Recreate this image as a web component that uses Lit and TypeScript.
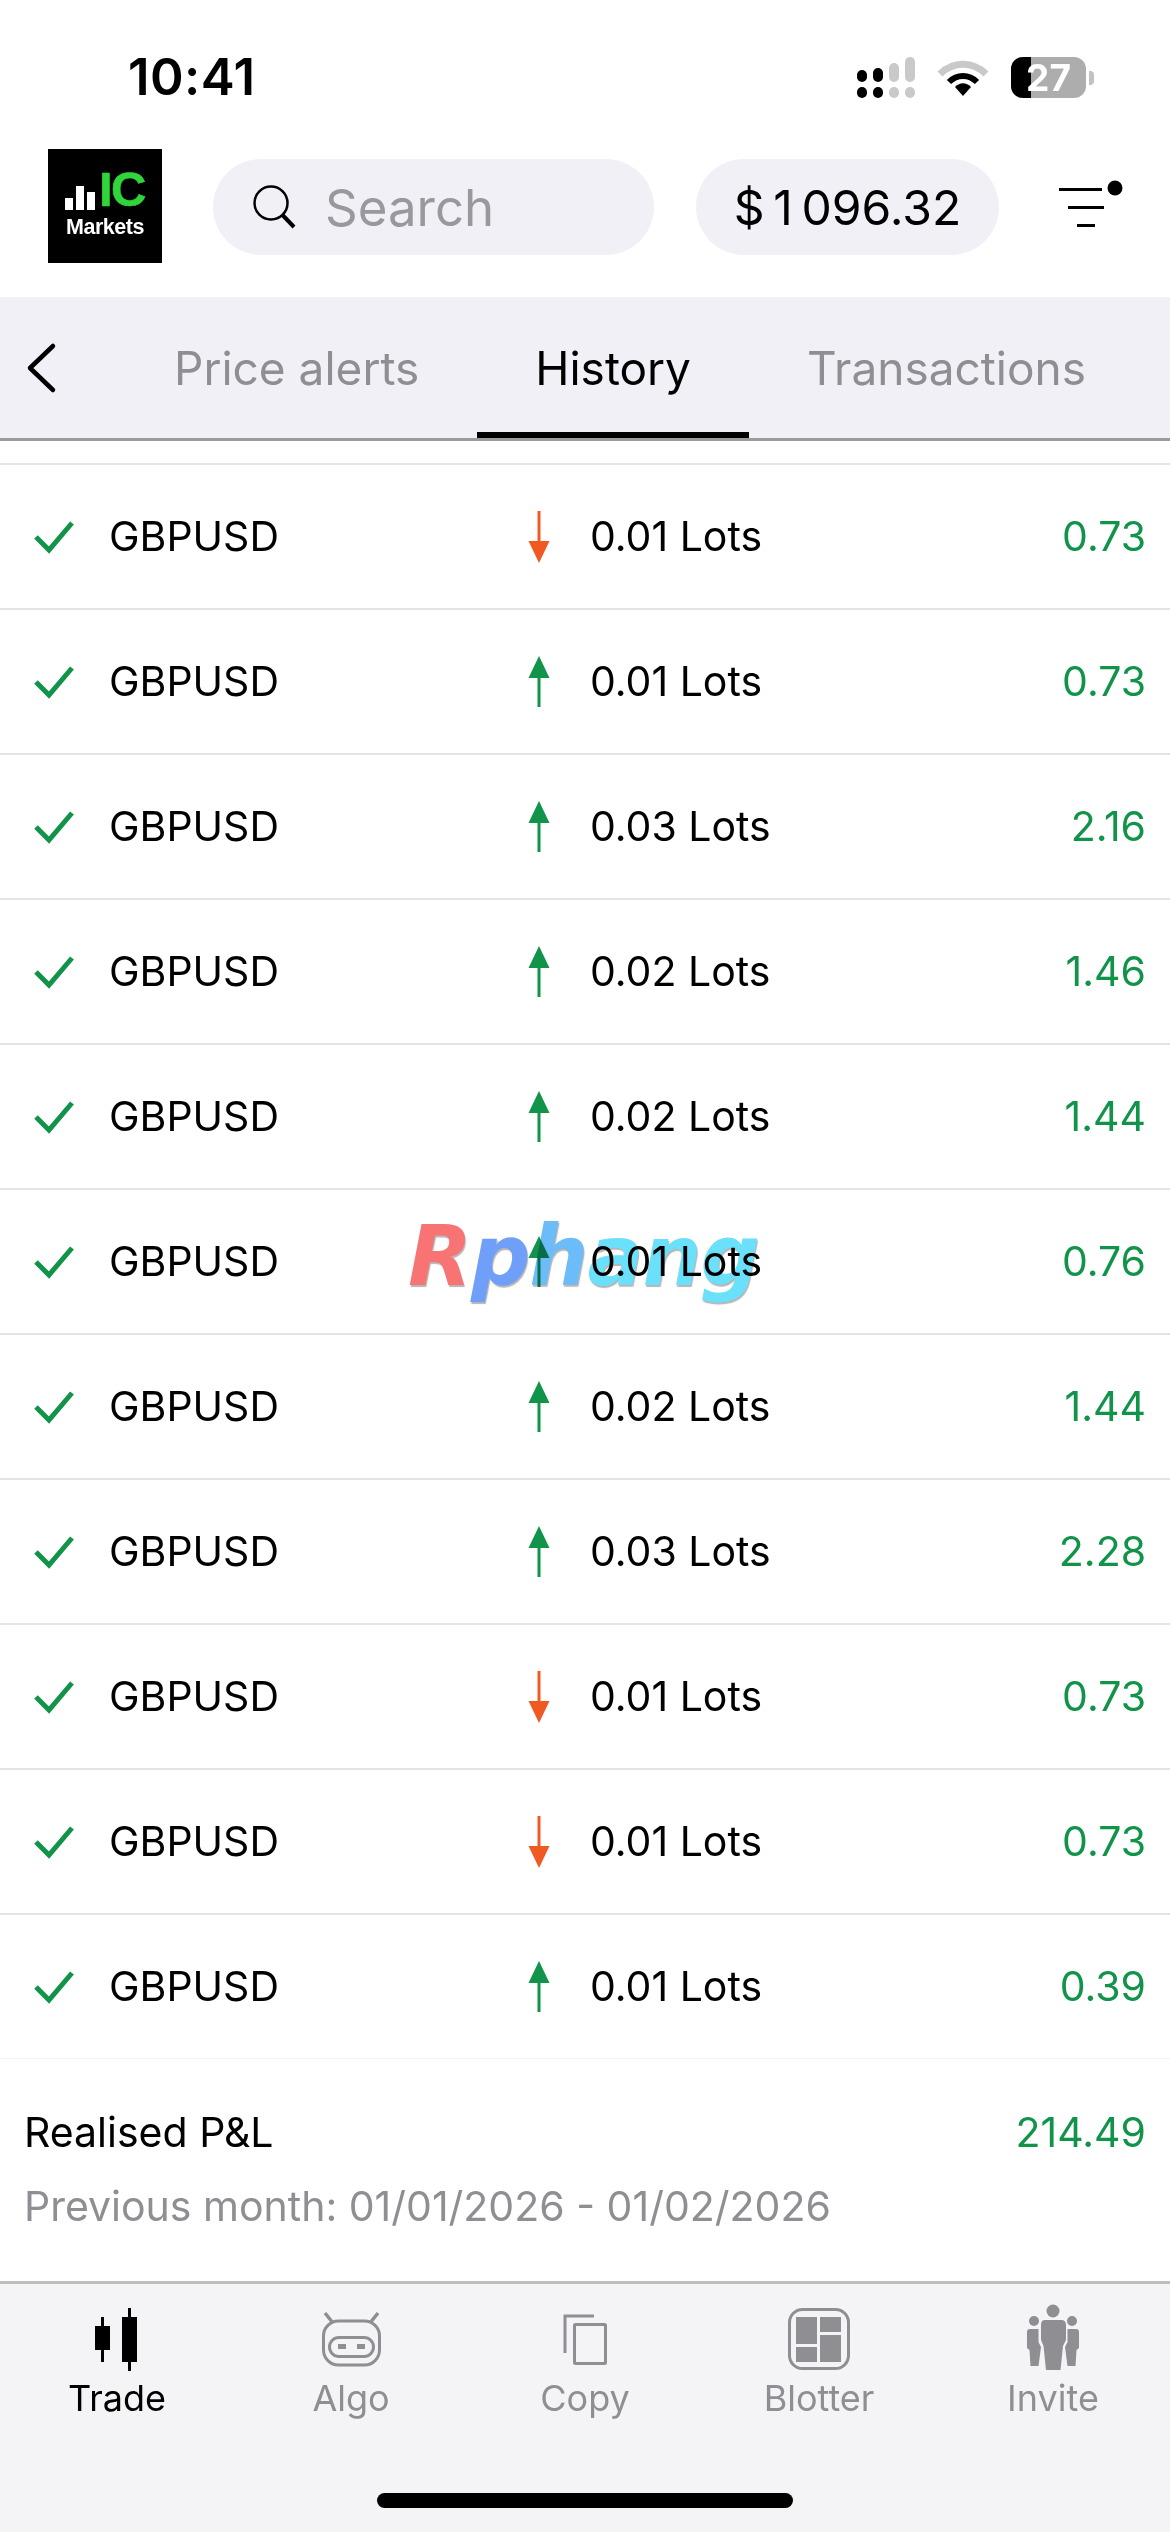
import { LitElement, html, css, svg } from "lit";
import { customElement } from "lit/decorators.js";

type Row = { dir: "up" | "down"; lots: string; pnl: string };
const rows: Row[] = [
  { dir: "down", lots: "0.01", pnl: "0.73" },
  { dir: "up", lots: "0.01", pnl: "0.73" },
  { dir: "up", lots: "0.03", pnl: "2.16" },
  { dir: "up", lots: "0.02", pnl: "1.46" },
  { dir: "up", lots: "0.02", pnl: "1.44" },
  { dir: "up", lots: "0.01", pnl: "0.76" },
  { dir: "up", lots: "0.02", pnl: "1.44" },
  { dir: "up", lots: "0.03", pnl: "2.28" },
  { dir: "down", lots: "0.01", pnl: "0.73" },
  { dir: "down", lots: "0.01", pnl: "0.73" },
  { dir: "up", lots: "0.01", pnl: "0.39" },
];

const navIcons = {
  trade: svg`<g fill="#000"><rect x="10" y="19" width="15" height="24"/><rect x="16" y="10" width="3" height="45"/><rect x="37" y="10" width="15" height="45"/><rect x="43" y="1" width="3" height="63"/></g>`,
  algo: svg`<g fill="none" stroke="#8e8e93" stroke-width="3"><rect x="4.5" y="14" width="56" height="44" rx="15"/><rect x="10.5" y="30.5" width="44" height="19" rx="9.5"/><path d="M6 6l8 10M59 6l-8 10" stroke-width="3.5"/></g><rect x="19" y="37" width="8" height="5" fill="#8e8e93"/><rect x="38" y="37" width="8" height="5" fill="#8e8e93"/>`,
  copy: svg`<g fill="none" stroke="#8e8e93" stroke-width="3"><path d="M12 46V9H41"/><rect x="21.5" y="17.5" width="31" height="39" rx="1"/></g>`,
  blotter: svg`<rect x="2.5" y="2.5" width="59" height="59" rx="13" fill="none" stroke="#8e8e93" stroke-width="3"/><g fill="#8e8e93"><rect x="9" y="10" width="21" height="27"/><rect x="9" y="40" width="21" height="15"/><rect x="33" y="10" width="21" height="15"/><rect x="33" y="28" width="21" height="27"/></g>`,
  invite: svg`<g fill="#8e8e93"><circle cx="32" cy="4" r="6.5"/><circle cx="13" cy="14" r="5"/><circle cx="51" cy="14" r="5"/><path d="M24 13H40Q45 13 45 18V33L42 39 39.5 63H25L22.500 39 20 33V18Q20 13 24 13Z"/><path d="M9 22H17.500V35L20 40 17.500 59H9.500L8.500 43 6 41V25Q6 22 9 22Z"/><path d="M55 22H46.500V35L44 40 46.500 59H54.500L55.500 43 58 41V25Q58 22 55 22Z"/></g>`,
};

const nav = [
  { label: "Trade", icon: navIcons.trade, active: true },
  { label: "Algo", icon: navIcons.algo, active: false },
  { label: "Copy", icon: navIcons.copy, active: false },
  { label: "Blotter", icon: navIcons.blotter, active: false },
  { label: "Invite", icon: navIcons.invite, active: false },
];

@customElement("app-root")
export class AppRoot extends LitElement {
  static styles = css`
    :host {
      display: block;
      width: 1170px;
      height: 2532px;
      position: relative;
      overflow: hidden;
      background: #fff;
      font-family: Inter, "Liberation Sans", sans-serif;
      color: #000;
    }
    .page { display: flex; flex-direction: column; height: 2532px; }
    .status { height: 149px; display: flex; justify-content: space-between; flex: none; }
    .time { font-size: 51px; font-weight: 600; padding: 47px 0 0 128px; line-height: 60px; letter-spacing: 0.4px; }
    .sys { display: flex; gap: 22px; padding: 57px 76px 0 0; align-items: flex-start; }
    .sys svg { display: block; }
    .battery { position: relative; width: 75px; height: 41px; border-radius: 12px; background: #adadad; display: flex; align-items: center; justify-content: center; color: #fff; font-weight: 700; font-size: 37px; line-height: 41px; }
    .batt-fill { position: absolute; left: 0; top: 0; bottom: 0; width: 20px; background: #000; border-radius: 12px 0 0 12px; }
    .batt-num { position: relative; }
    .batt-wrap { display: flex; align-items: center; gap: 3px; }
    .nub { width: 5px; height: 14px; background: #c2c2c2; border-radius: 0 4px 4px 0; }

    .header { height: 148px; flex: none; display: flex; align-items: flex-start; }
    .logo { margin: 0 0 0 48px; width: 114px; height: 114px; background: #000; display: flex; flex-direction: column; align-items: center; flex: none; }
    .logo-top { display: flex; align-items: flex-end; margin-top: 19px; height: 42px; gap: 3px; }
    .bar { width: 8px; background: #fff; }
    .ic { color: #2fd63a; font-family: "Liberation Sans", sans-serif; font-weight: 700; font-size: 49px; line-height: 42px; letter-spacing: -1.5px; margin-left: 1px; -webkit-text-stroke: 0.6px #2fd63a; }
    .markets { color: #fff; font-family: "Liberation Sans", sans-serif; font-weight: 700; font-size: 21.500px; line-height: 24px; margin-top: 5px; letter-spacing: -0.5px; }
    .pill { background: #f0f0f6; border-radius: 48px; height: 96px; margin-top: 10px; display: flex; align-items: center; flex: none; }
    .search { margin-left: 51px; width: 441px; }
    .search svg { margin-left: 40px; flex: none; display: block; margin-top: 4px; }
    .search span { margin-left: 26px; font-size: 51px; color: #98989d; }
    .balance { margin-left: 42px; width: 303px; justify-content: center; font-size: 48px; }
    .filter { margin: 30px 0 0 60px; display: block; flex: none; }

    .tabs { height: 144px; flex: none; background: #f0f0f6; border-bottom: 3px solid #9b9b9f; box-sizing: border-box; display: flex; }
    .back { width: 116px; flex: none; display: flex; align-items: center; padding-left: 26px; box-sizing: border-box; }
    .tab { padding: 6px 58px 0; font-size: 46px; color: #8e8e93; display: flex; align-items: center; white-space: nowrap; box-sizing: border-box; height: 141px; border-bottom: 6px solid transparent; }
    .tab.active { color: #000; border-bottom-color: #000; }
    .spacer { height: 22px; flex: none; }

    .list { flex: none; }
    .row { height: 145px; box-sizing: border-box; border-top: 2px solid #e4e4e6; display: flex; align-items: center; font-size: 41px; }
    .check { margin-left: 33px; flex: none; display: block; }
    .sym { margin-left: 34px; width: 417px; padding-bottom: 2px; }
    .arrow { flex: none; display: block; width: 26px; }
    .lots { margin-left: 38px; padding-bottom: 2px; }
    .pnl { margin-left: auto; padding: 0 24px 2px 0; color: #12934a; }

    .summary { flex: none; height: 223px; box-sizing: border-box; border-top: 1px solid #f2f2f4; padding: 0 24px; display: flex; flex-direction: column; font-size: 41px; }
    .sum-top { display: flex; justify-content: space-between; margin-top: 45px; line-height: 56px; }
    .gain { color: #12934a; }
    .period { color: #8e8e93; margin-top: 18px; line-height: 56px; }

    .nav { flex: 1; background: #f4f4f6; border-top: 3px solid #bdbdbf; position: relative; }
    .nav-items { display: flex; }
    .nav-item { width: 234px; display: flex; flex-direction: column; align-items: center; padding-top: 23px; color: #8e8e93; font-size: 36px; }
    .nav-item.active { color: #000; }
    .nav-item svg { display: block; overflow: visible; }
    .nav-item span { line-height: 44px; margin-top: 5px; }
    .home { width: 416px; height: 15px; border-radius: 8px; background: #000; margin: 73px auto 0; }

    .watermark { position: absolute; left: 408px; top: 1197px; font-family: "DejaVu Sans", sans-serif; font-weight: 700; font-style: italic; font-size: 83px; line-height: 120px; mix-blend-mode: multiply; white-space: nowrap; letter-spacing: -1px; text-shadow: 1px 2px 1px rgba(90,90,90,.45); }
    .wr { color: #f87474; }
    .wp { color: #6f9ff8; }
    .wh { color: #6cbcf9; }
    .wa { color: #6be0fb; }
  `;

  private arrow(dir: "up" | "down") {
    const color = dir === "up" ? "#12934a" : "#f05a22";
    return html`<svg class="arrow" width="26" height="52" viewBox="0 0 26 52">
      ${dir === "up"
        ? svg`<path d="M13 20V51" stroke=${color} stroke-width="3"/><path d="M13 0 2.500 22H23.500Z" fill=${color}/>`
        : svg`<path d="M13 0V32" stroke=${color} stroke-width="3"/><path d="M13 52 2.500 30H23.500Z" fill=${color}/>`}
    </svg>`;
  }

  render() {
    return html`
      <div class="page">
        <div class="status">
          <div class="time">10:41</div>
          <div class="sys">
            <svg width="58" height="41" viewBox="0 0 58 41">
              <g fill="#000"><rect x="0" y="13" width="10" height="12" rx="5"/><rect x="0" y="30" width="10" height="11" rx="5"/><rect x="16" y="11" width="10" height="14" rx="5"/><rect x="16" y="30" width="10" height="11" rx="5"/></g>
              <g fill="#c9c9c9"><rect x="32" y="6" width="10" height="19" rx="5"/><rect x="32" y="30" width="10" height="11" rx="5"/><rect x="48" y="0" width="10" height="25" rx="5"/><rect x="48" y="30" width="10" height="11" rx="5"/></g>
            </svg>
            <svg width="52" height="38" viewBox="0 0 52 38" style="margin-top:2px">
              <path d="M3 15C16 2 36 2 49 15" fill="none" stroke="#c9c9c9" stroke-width="7"/>
              <path d="M12 23C20 15 32 15 40 23" fill="none" stroke="#000" stroke-width="6"/>
              <path d="M18 28C23 23 29 23 34 28L26 37Z" fill="#000"/>
            </svg>
            <div class="batt-wrap">
              <div class="battery"><div class="batt-fill"></div><span class="batt-num">27</span></div>
              <div class="nub"></div>
            </div>
          </div>
        </div>

        <div class="header">
          <div class="logo">
            <div class="logo-top">
              <div class="bar" style="height:12px"></div>
              <div class="bar" style="height:24px"></div>
              <div class="bar" style="height:18px"></div>
              <div class="ic">IC</div>
            </div>
            <div class="markets">Markets</div>
          </div>
          <div class="pill search">
            <svg width="46" height="48" viewBox="0 0 46 48">
              <circle cx="18" cy="18" r="16.500" fill="none" stroke="#000" stroke-width="2.500"/>
              <path d="M29.500 30 41 42" stroke="#000" stroke-width="4" fill="none"/>
            </svg>
            <span>Search</span>
          </div>
          <div class="pill balance">$\u20091\u2009096.32</div>
          <svg class="filter" width="64" height="50" viewBox="0 0 64 50">
            <rect x="0" y="9" width="43" height="3" fill="#000"/>
            <rect x="9" y="27" width="36" height="3" fill="#000"/>
            <rect x="18" y="45" width="18" height="3" fill="#000"/>
            <circle cx="56" cy="9" r="7.500" fill="#000"/>
          </svg>
        </div>

        <div class="tabs">
          <div class="back">
            <svg width="32" height="52" viewBox="0 0 32 52">
              <path d="M27 4 4 26 27 48" fill="none" stroke="#000" stroke-width="4.500" stroke-linecap="round" stroke-linejoin="round"/>
            </svg>
          </div>
          <div class="tab">Price alerts</div>
          <div class="tab active">History</div>
          <div class="tab">Transactions</div>
        </div>
        <div class="spacer"></div>

        <div class="list">
          ${rows.map(
            (r) => html`<div class="row">
              <svg class="check" width="42" height="34" viewBox="0 0 42 34">
                <path d="M3 17 16 30 39 3" fill="none" stroke="#12934a" stroke-width="5"/>
              </svg>
              <div class="sym">GBPUSD</div>
              ${this.arrow(r.dir)}
              <div class="lots">${r.lots} Lots</div>
              <div class="pnl">${r.pnl}</div>
            </div>`
          )}
        </div>

        <div class="summary">
          <div class="sum-top"><span>Realised P&amp;L</span><span class="gain">214.49</span></div>
          <div class="period">Previous month: 01/01/2026 - 01/02/2026</div>
        </div>

        <div class="nav">
          <div class="nav-items">
            ${nav.map(
              (n) => html`<div class="nav-item ${n.active ? "active" : ""}">
                <svg width="64" height="64" viewBox="0 0 64 64">${n.icon}</svg>
                <span>${n.label}</span>
              </div>`
            )}
          </div>
          <div class="home"></div>
        </div>
      </div>
      <div class="watermark"><span class="wr">R</span><span class="wp">p</span><span class="wh">h</span><span class="wa">ang</span></div>
    `;
  }
}
